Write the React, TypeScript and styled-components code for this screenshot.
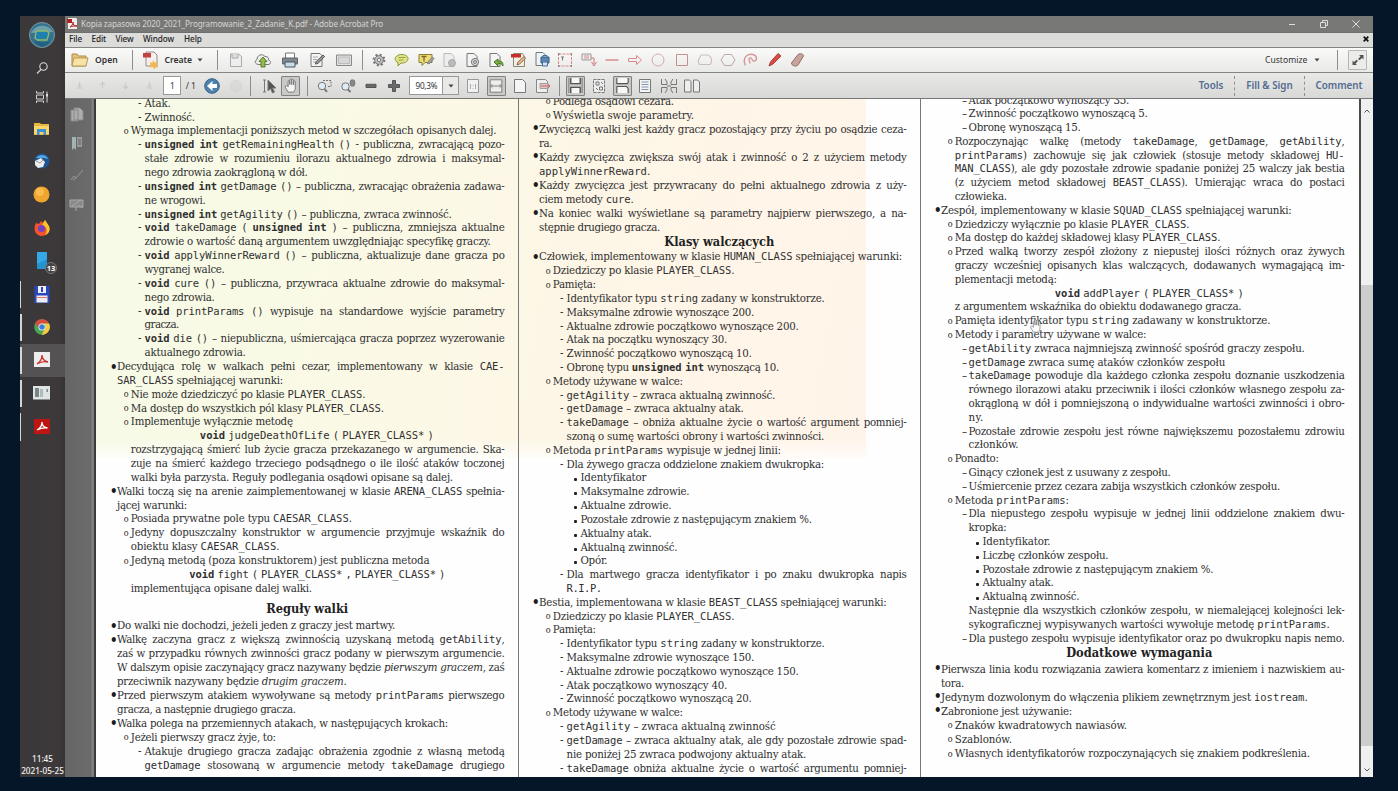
import React from 'react';
import styled, { createGlobalStyle, css } from 'styled-components';

const GlobalStyle = createGlobalStyle`
  * { box-sizing: border-box; }
  html, body { margin: 0; padding: 0; background: #041628; overflow: hidden; }
`;

const ui = `'Noto Sans', 'Open Sans', sans-serif`;
const serif = `'DejaVu Serif Condensed', 'DejaVu Serif', serif`;
const mono = `'DejaVu Sans Mono', 'Liberation Mono', monospace`;
const tracking = -0.27;

const Desktop = styled.div`
  width: 1398px; height: 791px; padding: 16px 25px 14px 20px;
  background: #041628; display: flex; font-family: ${ui};
`;
const Taskbar = styled.nav`
  width: 45px; flex: none; background: linear-gradient(90deg, #3b3839, #3d393a 85%, #363334);
  display: flex; flex-direction: column; align-items: stretch;
`;
const TaskSlot = styled.div<{ $h: number; $open?: number; $active?: boolean }>`
  height: ${p => p.$h}px; flex: none; display: flex; align-items: center; justify-content: center;
  position: relative; background: ${p => (p.$active ? '#555253' : 'transparent')}; padding-right: 2px;
  ${p => p.$open && css`&::before { content: ''; position: absolute; left: 0; top: 3px; bottom: 3px; width: ${p.$open}px; background: #d5d5d5; }`}
`;
const Badge = styled.span`
  position: absolute; left: 25px; top: 17px; width: 12px; height: 12px; border-radius: 6px;
  background: #444; border: 1px solid #777; color: #fff; font: 700 7.5px/10px ${ui}; text-align: center;
`;
const Clock = styled.div`
  margin-top: auto; padding-bottom: 0; height: 24.5px; color: #f1f1f1; text-align: center;
  font: 500 8.2px/12px ${ui}; white-space: nowrap;
`;
const Win = styled.div`flex: 1; min-width: 0; display: flex; flex-direction: column;`;
const TitleBar = styled.header`
  height: 15.5px; background: #787977; display: flex; align-items: center; padding: 0 1.5px 0 2px; color: #d4d4d2;
  font: 400 8.1px/16px ${ui}; flex: none;
`;
const TitleText = styled.span`margin-left: 3px; flex: 1; white-space: nowrap; letter-spacing: -0.13px;`;
const WinButton = styled.span`width: 32px; display: flex; justify-content: center;`;
const MenuBar = styled.div`
  height: 16px; flex: none; background: #dcdcda; border-top: 1px solid #6f6f6f; border-bottom: 1px solid #858583;
  display: flex; align-items: center; font: 500 8.2px/13px ${ui}; color: #222; padding: 0 0 1.5px 4px;
`;
const MenuItem = styled.span<{ $w: number }>`width: ${p => p.$w}px; letter-spacing: -0.08px;`;
const MenuClose = styled.span`margin-left: auto; width: 14px; display: flex; justify-content: center;`;
const Toolbar = styled.div<{ $second?: boolean }>`
  height: ${p => (p.$second ? 26 : 25.5)}px; flex: none; display: flex; align-items: center; color: #333;
  background: ${p => (p.$second ? 'linear-gradient(#e9e9e8, #d8d8d6)' : 'linear-gradient(#fafaf9, #e9e9e8)')};
  border-bottom: ${p => (p.$second ? '1px solid #777' : '1px solid #858583')};
  font: 600 8.6px/20px ${ui};
`;
const Slot = styled.span<{ $w: number; $faded?: boolean }>`
  width: ${p => p.$w}px; flex: none; height: 22px; display: flex; align-items: center; justify-content: center;
  opacity: ${p => (p.$faded ? 0.3 : 1)};
`;
const Pressed = styled.span`
  width: 19px; height: 20px; flex: none; display: flex; align-items: center; justify-content: center;
  background: #c9c9c7; border: 1px solid #828280; border-radius: 1px;
`;
const FullView = styled(Pressed)`background: #ececea; border-color: #b5b5b3; margin-right: 6px;`;
const Label = styled.span<{ $w: number; $light?: boolean }>`
  width: ${p => p.$w}px; flex: none; white-space: nowrap; font-weight: ${p => (p.$light ? 400 : 600)};
`;
const Sep = styled.i<{ $before?: number; $after?: number; $dotted?: boolean }>`
  width: 0; height: 20px; flex: none; border-left: 1px ${p => (p.$dotted ? 'dashed' : 'solid')} #8d8d8b;
  margin: 0 ${p => p.$after || 0}px 0 ${p => p.$before || 0}px;
`;
const Field = styled.span<{ $w: number; $ml?: number }>`
  width: ${p => p.$w}px; height: 19px; margin-left: ${p => p.$ml || 0}px; flex: none; background: #fff; border: 1px solid #999;
  font: 400 8.2px/17px ${ui}; text-align: center; color: #333; letter-spacing: -0.3px;
`;
const DropButton = styled.span`
  width: 16px; height: 19px; flex: none; border: 1px solid #999; border-left: 0; background: #e9e9e8;
  display: flex; align-items: center; justify-content: center; margin-right: 1.5px;
`;
const Grow = styled.span`flex: 1;`;
const PanelLink = styled.span<{ $w: number }>`
  width: ${p => p.$w}px; text-align: center; color: #526c90; font: 600 9.8px/20px ${ui}; white-space: nowrap;
`;
const Body = styled.div`flex: 1; min-height: 0; display: flex;`;
const SidePanel = styled.aside`
  width: 29px; flex: none; background: linear-gradient(90deg, #666 0, #6b6b6b 90%, #858585 94%, #777 100%);
  display: flex; flex-direction: column; align-items: center; padding: 0 5px 0 0;
`;
const SideSlot = styled.div`height: 30.3px; display: flex; align-items: center; justify-content: center;`;
const Page = styled.main`
  flex: 1; min-width: 0; display: flex; overflow: hidden; position: relative;
  border-left: 2px solid #3c3c3c; border-right: 2px solid #4b4b4b;
  background:
    linear-gradient(rgba(255,255,255,0) 340px, rgba(255,255,255,.85) 362px) 0 0 / 770px 362px no-repeat,
    linear-gradient(100deg, #f6fae6 0%, #f9fae6 27%, #fcf8e6 45%, #fdf6e6 62%, #fff5e9 85%, #fff4e9 100%) 0 0 / 770px 360px no-repeat,
    #fefefe;
`;
const Column = styled.section<{ $w: number; $pl: number; $body: number; $top: number; $border?: boolean }>`
  width: ${p => p.$w}px; flex: none; padding-left: ${p => p.$pl}px; overflow: hidden;
  border-right: ${p => (p.$border ? '1px solid #777' : '0')};
  > * { width: ${p => p.$body}px; }
  > :first-child { margin-top: ${p => p.$top}px; }
`;
const Block = styled.div<{ $lh: number }>`
  font: 400 11.4px/${p => p.$lh}px ${serif}; color: #303030; letter-spacing: ${tracking}px;
`;
const Heading = styled.h2<{ $h: number; $drop?: number }>`
  margin: 0 0 0 -3.500px; padding: ${p => p.$drop || 0}px 0 0; height: ${p => p.$h}px; display: flex; align-items: center; justify-content: center;
  font: 700 12.7px/14px ${serif}; color: #222; letter-spacing: 0;
`;
const Row = styled.div<{ $pl: number }>`
  padding-left: ${p => p.$pl}px; position: relative; height: 1lh; white-space: nowrap;
`;
const Marker = styled.span<{ $kind: string; $pl: number }>`
  position: absolute; top: 0; left: ${p => p.$pl - 6.5}px; color: #1c1c1c; letter-spacing: 0;
  ${p => p.$kind === 'o' && css`font-size: 9px; left: ${p.$pl - 7}px; top: .5px;`}
  ${p => p.$kind === '•' && css`font-size: 16px; left: ${p.$pl - 7.5}px; top: .5px;`}
  ${p => p.$kind === '·' && css`&::before { content: ''; display: block; width: 3px; height: 3px; border-radius: 1px; background: #222; margin-top: 7px; }`}
`;
const Line = styled.span<{ $w: number }>`
  display: block; width: ${p => (p.$w ? `${p.$w}px` : '100%')}; text-align-last: justify; white-space: nowrap;
`;
const Code = styled.code<{ $bold?: boolean }>`
  font-family: ${mono}; font-size: 10.5px; font-weight: ${p => (p.$bold ? 700 : 400)}; letter-spacing: -0.12px; line-height: 1px;
  word-spacing: ${p => (p.$bold ? -2.5 : 0)}px;
`;
const Scroll = styled.div`
  width: 12px; flex: none; background: #f0f0f0; display: flex; flex-direction: column; align-items: center;
`;
const ScrollCap = styled.div<{ $h: number }>`height: ${p => p.$h}px; display: flex; align-items: center;`;
const ScrollEnd = styled(ScrollCap)`align-items: flex-end; padding-bottom: 5px;`;
const Thumb = styled.div`width: 12px; height: 461px; background: #cdcdcd;`;
const HandPointer = styled.span`position: absolute; left: 933px; top: 218px; line-height: 0;`;

type RowData = [marker: string, level: number, width: number, text: string, shift?: number];

const col1a: RowData[] = [
  ['-', 2, 26, 'Atak.'],
  ['-', 2, 50, 'Zwinność.'],
  ['o', 1, 365.5, 'Wymaga implementacji poniższych metod w szczegółach opisanych dalej.'],
  ['-', 2, 0, '~unsigned int~ `getRemainingHealth` `()` - publiczna, zwracającą pozo-'],
  ['', 2, 0, 'stałe zdrowie w rozumieniu ilorazu aktualnego zdrowia i maksymal-'],
  ['', 2, 163, 'nego zdrowia zaokrągloną w dół.'],
  ['-', 2, 0, '~unsigned int~ `getDamage` `()` – publiczna, zwracając obrażenia zadawa-'],
  ['', 2, 61, 'ne wrogowi.'],
  ['-', 2, 307, '~unsigned int~ `getAgility` `()` – publiczna, zwraca zwinność.'],
  ['-', 2, 0, '~void~ `takeDamage` `(` ~unsigned int~ `)` – publiczna, zmniejsza aktualne'],
  ['', 2, 346, 'zdrowie o wartość daną argumentem uwzględniając specyfikę graczy.'],
  ['-', 2, 0, '~void~ `applyWinnerReward` `()` – publiczna, aktualizuje dane gracza po'],
  ['', 2, 80, 'wygranej walce.'],
  ['-', 2, 0, '~void~ `cure` `()` – publiczna, przywraca aktualne zdrowie do maksymal-'],
  ['', 2, 70, 'nego zdrowia.'],
  ['-', 2, 0, '~void~ `printParams` `()` wypisuje na standardowe wyjście parametry'],
  ['', 2, 34, 'gracza.'],
  ['-', 2, 0, '~void~ `die` `()` – niepubliczna, uśmiercająca gracza poprzez wyzerowanie'],
  ['', 2, 101, 'aktualnego zdrowia.'],
  ['•', 0, 0, 'Decydująca rolę w walkach pełni cezar, implementowany w klasie `CAE-`'],
  ['', 0, 166, '`SAR_CLASS` spełniającej warunki:'],
  ['o', 1, 234.5, 'Nie może dziedziczyć po klasie `PLAYER_CLASS`.'],
  ['o', 1, 253, 'Ma dostęp do wszystkich pól klasy `PLAYER_CLASS`.'],
  ['o', 1, 162, 'Implementuje wyłącznie metodę'],
  ['', 1, 234, '~void~ `judgeDeathOfLife` `(` `PLAYER_CLASS*` `)`', 69],
  ['', 1, 0, 'rozstrzygającą śmierć lub życie gracza przekazanego w argumencie. Ska-'],
  ['', 1, 0, 'zuje na śmierć każdego trzeciego podsądnego o ile ilość ataków toczonej'],
  ['', 1, 322, 'walki była parzysta. Reguły podlegania osądowi opisane są dalej.'],
  ['•', 0, 0, 'Walki toczą się na arenie zaimplementowanej w klasie `ARENA_CLASS` spełnia-'],
  ['', 0, 70, 'jącej warunki:'],
  ['o', 1, 221, 'Posiada prywatne pole typu `CAESAR_CLASS`.'],
  ['o', 1, 0, 'Jedyny dopuszczalny konstruktor w argumencie przyjmuje wskaźnik do'],
  ['', 1, 148.5, 'obiektu klasy `CAESAR_CLASS`.'],
  ['o', 1, 298.5, 'Jedyną metodą (poza konstruktorem) jest publiczna metoda'],
  ['', 1, 256, '~void~ `fight` `(` `PLAYER_CLASS*` `,` `PLAYER_CLASS*` `)`', 58.5],
  ['', 1, 181, 'implementująca opisane dalej walki.'],
];
const col1b: RowData[] = [
  ['•', 0, 278, 'Do walki nie dochodzi, jeżeli jeden z graczy jest martwy.'],
  ['•', 0, 0, 'Walkę zaczyna gracz z większą zwinnością uzyskaną metodą `getAbility`,'],
  ['', 0, 0, 'zaś w przypadku równych zwinności gracz podany w pierwszym argumencie.'],
  ['', 0, 0, 'W dalszym opisie zaczynający gracz nazywany będzie ^pierwszym graczem^, zaś'],
  ['', 0, 229.5, 'przeciwnik nazywany będzie ^drugim graczem^.'],
  ['•', 0, 0, 'Przed pierwszym atakiem wywoływane są metody `printParams` pierwszego'],
  ['', 0, 178.5, 'gracza, a następnie drugiego gracza.'],
  ['•', 0, 331, 'Walka polega na przemiennych atakach, w następujących krokach:'],
  ['o', 1, 145, 'Jeżeli pierwszy gracz żyje, to:'],
  ['-', 2, 0, 'Atakuje drugiego gracza zadając obrażenia zgodnie z własną metodą'],
  ['', 2, 0, '`getDamage` stosowaną w argumencie metody `takeDamage` drugiego'],
];
const col2a: RowData[] = [
  ['o', 1, 121, 'Podlega osądowi cezara.'],
  ['o', 1, 141, 'Wyświetla swoje parametry.'],
  ['•', 0, 0, 'Zwycięzcą walki jest każdy gracz pozostający przy życiu po osądzie ceza-'],
  ['', 0, 13, 'ra.'],
  ['•', 0, 0, 'Każdy zwycięzca zwiększa swój atak i zwinność o 2 z użyciem metody'],
  ['', 0, 111, '`applyWinnerReward`.'],
  ['•', 0, 0, 'Każdy zwycięzca jest przywracany do pełni aktualnego zdrowia z uży-'],
  ['', 0, 94.5, 'ciem metody `cure`.'],
  ['•', 0, 0, 'Na koniec walki wyświetlane są parametry najpierw pierwszego, a na-'],
  ['', 0, 121, 'stępnie drugiego gracza.'],
];
const col2b: RowData[] = [
  ['•', 0, 363, 'Człowiek, implementowany w klasie `HUMAN_CLASS` spełniającej warunki:'],
  ['o', 1, 181.5, 'Dziedziczy po klasie `PLAYER_CLASS`.'],
  ['o', 1, 43, 'Pamięta:'],
  ['-', 2, 258, 'Identyfikator typu `string` zadany w konstruktorze.'],
  ['-', 2, 187.5, 'Maksymalne zdrowie wynoszące 200.'],
  ['-', 2, 232, 'Aktualne zdrowie początkowo wynoszące 200.'],
  ['-', 2, 160.5, 'Atak na początku wynoszący 30.'],
  ['-', 2, 185, 'Zwinność początkowo wynoszącą 10.'],
  ['-', 2, 212.5, 'Obronę typu ~unsigned int~ wynoszącą 10.'],
  ['o', 1, 130, 'Metody używane w walce:'],
  ['-', 2, 208.5, '`getAgility` – zwraca aktualną zwinność.'],
  ['-', 2, 177, '`getDamage` – zwraca aktualny atak.'],
  ['-', 2, 0, '`takeDamage` – obniża aktualne życie o wartość argument pomniej-'],
  ['', 2, 257.5, 'szoną o sumę wartości obrony i wartości zwinności.'],
  ['o', 1, 228, 'Metoda `printParams` wypisuje w jednej linii:'],
  ['-', 2, 257.5, 'Dla żywego gracza oddzielone znakiem dwukropka:'],
  ['·', 3, 66, 'Identyfikator'],
  ['·', 3, 109, 'Maksymalne zdrowie.'],
  ['·', 3, 91, 'Aktualne zdrowie.'],
  ['·', 3, 231.5, 'Pozostałe zdrowie z następującym znakiem %.'],
  ['·', 3, 71, 'Aktualny atak.'],
  ['·', 3, 97, 'Aktualną zwinność.'],
  ['·', 3, 27, 'Opór.'],
  ['-', 2, 0, 'Dla martwego gracza identyfikator i po znaku dwukropka napis'],
  ['', 2, 35, '`R.I.P.`'],
  ['•', 0, 347.5, 'Bestia, implementowana w klasie `BEAST_CLASS` spełniającej warunki:'],
  ['o', 1, 181.5, 'Dziedziczy po klasie `PLAYER_CLASS`.'],
  ['o', 1, 43, 'Pamięta:'],
  ['-', 2, 258, 'Identyfikator typu `string` zadany w konstruktorze.'],
  ['-', 2, 187.5, 'Maksymalne zdrowie wynoszące 150.'],
  ['-', 2, 232, 'Aktualne zdrowie początkowo wynoszące 150.'],
  ['-', 2, 160.5, 'Atak początkowo wynoszący 40.'],
  ['-', 2, 185, 'Zwinność początkowo wynoszącą 20.'],
  ['o', 1, 130, 'Metody używane w walce:'],
  ['-', 2, 209, '`getAgility` – zwraca aktualną zwinność'],
  ['-', 2, 0, '`getDamage` – zwraca aktualny atak, ale gdy pozostałe zdrowie spad-'],
  ['', 2, 239.5, 'nie poniżej 25 zwraca podwojony aktualny atak.'],
  ['-', 2, 0, '`takeDamage` obniża aktualne życie o wartość argumentu pomniej-'],
];
const col3a: RowData[] = [
  ['–', 2, 160.5, 'Atak początkowo wynoszący 35.'],
  ['–', 2, 179, 'Zwinność początkowo wynoszącą 5.'],
  ['–', 2, 112, 'Obronę wynoszącą 15.'],
  ['o', 1, 0, 'Rozpoczynając walkę (metody `takeDamage`, `getDamage`, `getAbility`,'],
  ['', 1, 0, '`printParams`) zachowuje się jak człowiek (stosuje metody składowej `HU-`'],
  ['', 1, 0, '`MAN_CLASS`), ale gdy pozostałe zdrowie spadanie poniżej 25 walczy jak bestia'],
  ['', 1, 0, '(z użyciem metod składowej `BEAST_CLASS`). Umierając wraca do postaci'],
  ['', 1, 52, 'człowieka.'],
  ['•', 0, 350.5, 'Zespół, implementowany w klasie `SQUAD_CLASS` spełniającej warunki:'],
  ['o', 1, 234.5, 'Dziedziczy wyłącznie po klasie `PLAYER_CLASS`.'],
  ['o', 1, 265.5, 'Ma dostęp do każdej składowej klasy `PLAYER_CLASS`.'],
  ['o', 1, 0, 'Przed walką tworzy zespół złożony z niepustej ilości różnych oraz żywych'],
  ['', 1, 0, 'graczy wcześniej opisanych klas walczących, dodawanych wymagającą im-'],
  ['', 1, 102, 'plementacji metodą:'],
  ['', 1, 189, '~void~ `addPlayer` `(` `PLAYER_CLASS*` `)`', 100],
  ['', 1, 286.5, 'z argumentem wskaźnika do obiektu dodawanego gracza.'],
  ['o', 1, 315.5, 'Pamięta identyfikator typu `string` zadawany w konstruktorze.'],
  ['o', 1, 191.5, 'Metody i parametry używane w walce:'],
  ['–', 2, 336, '`getAbility` zwraca najmniejszą zwinność spośród graczy zespołu.'],
  ['–', 2, 256.5, '`getDamage` zwraca sumę ataków członków zespołu'],
  ['–', 2, 0, '`takeDamage` powoduje dla każdego członka zespołu doznanie uszkodzenia'],
  ['', 2, 0, 'równego ilorazowi ataku przeciwnik i ilości członków własnego zespołu za-'],
  ['', 2, 0, 'okrągloną w dół i pomniejszoną o indywidualne wartości zwinności i obro-'],
  ['', 2, 15, 'ny.'],
  ['–', 2, 0, 'Pozostałe zdrowie zespołu jest równe największemu pozostałemu zdrowiu'],
  ['', 2, 50, 'członków.'],
  ['o', 1, 44, 'Ponadto:'],
  ['–', 2, 202, 'Ginący członek jest z usuwany z zespołu.'],
  ['–', 2, 311.5, 'Uśmiercenie przez cezara zabija wszystkich członków zespołu.'],
  ['o', 1, 114, 'Metoda `printParams`:'],
  ['–', 2, 0, 'Dla niepustego zespołu wypisuje w jednej linii oddzielone znakiem dwu-'],
  ['', 2, 38, 'kropka:'],
  ['·', 3, 68, 'Identyfikator.'],
  ['·', 3, 126, 'Liczbę członków zespołu.'],
  ['·', 3, 231, 'Pozostałe zdrowie z następującym znakiem %.'],
  ['·', 3, 71, 'Aktualny atak.'],
  ['·', 3, 97, 'Aktualną zwinność.'],
  ['', 2, 0, 'Następnie dla wszystkich członków zespołu, w niemalejącej kolejności lek-'],
  ['', 2, 361, 'sykograficznej wypisywanych wartości wywołuje metodę `printParams`.'],
  ['–', 2, 0, 'Dla pustego zespołu wypisuje identyfikator oraz po dwukropku napis nemo.'],
];
const col3b: RowData[] = [
  ['•', 0, 0, 'Pierwsza linia kodu rozwiązania zawiera komentarz z imieniem i nazwiskiem au-'],
  ['', 0, 23, 'tora.'],
  ['•', 0, 366.5, 'Jedynym dozwolonym do włączenia plikiem zewnętrznym jest `iostream`.'],
  ['•', 0, 131, 'Zabronione jest używanie:'],
  ['o', 1, 172, 'Znaków kwadratowych nawiasów.'],
  ['o', 1, 57, 'Szablonów.'],
  ['o', 1, 355, 'Własnych identyfikatorów rozpoczynających się znakiem podkreślenia.'],
];

const inline = (text: string) =>
  text.split(/(`[^`]+`|~[^~]+~|\^[^^]+\^)/).filter(Boolean).map((part, i) => {
    const inner = part.slice(1, -1);
    if (part[0] === '`') return <Code key={i}>{inner}</Code>;
    if (part[0] === '~') return <Code key={i} $bold>{inner}</Code>;
    if (part[0] === '^') return <em key={i}>{inner}</em>;
    return part;
  });

const FittedLine = ({ width, text }: { width: number; text: string }) => {
  const ref = React.useRef<HTMLSpanElement>(null);
  React.useLayoutEffect(() => {
    const el = ref.current;
    if (!el) return;
    const target = el.getBoundingClientRect().width;
    const range = document.createRange();
    range.selectNodeContents(el);
    el.style.textAlignLast = 'left';
    const natural = range.getBoundingClientRect().width;
    const count = (el.textContent || '').length;
    if (width || natural > target) {
      const delta = (target - natural) / count;
      el.style.letterSpacing = `${tracking + delta}px`;
      el.querySelectorAll('code').forEach(c => { c.style.letterSpacing = `${-0.12 + delta}px`; });
    }
    el.style.textAlignLast = '';
  }, [width, text]);
  return <Line ref={ref} $w={width}>{inline(text)}</Line>;
};

const Text = ({ rows, lh }: { rows: RowData[]; lh: number }) => (
  <Block $lh={lh}>
    {rows.map(([marker, level, width, text, shift = 0], i) => (
      <Row key={i} $pl={level * 13.8 + shift}>
        {marker && <Marker $kind={marker} $pl={level * 13.8}>{marker === '·' ? '' : marker}</Marker>}
        <FittedLine width={width} text={text} />
      </Row>
    ))}
  </Block>
);

const Svg = ({ s = 18, children }: { s?: number; children: React.ReactNode }) => (
  <svg width={s} height={s} viewBox="0 0 18 18" fill="none" stroke="#777" strokeWidth="1" strokeLinejoin="round">{children}</svg>
);
const Caret = () => <svg width="6" height="4" viewBox="0 0 6 4"><path d="M.5.5h5L3 3.4z" fill="#444" /></svg>;
const sheet = 'M4 2.5h7l3 3v10H4z';
const pinkLine = '#d98b8b';

const fileIcons = [
  <Svg><path d="M3.500 3h8l3 2.500v10h-11z" fill="#eee" stroke="#aaa" /><path d="M5 3v4h6V3" fill="#ddd" stroke="#aaa" /></Svg>,
  <Svg><path d="M5 13.500C1 13.500 0 10 3 8.500 3 4 8 2 11 5.500c3-.5 4 2 3.500 3.500 3 1 2.500 4.500-.5 4.500z" fill="#eee" stroke="#777" /><path d="M9 6l4 4.500h-2V16H7v-5.500H5z" fill="#93bb52" stroke="#587c2c" /></Svg>,
  <Svg><path d="M4.500 7V2h9v5" fill="#fff" /><path d="M1.500 7h15v6h-15z" fill="#7f878d" stroke="#60676d" /><path d="M4 11h10v5H4z" fill="#c8dcea" stroke="#4f565c" /></Svg>,
  <Svg><path d="M3 2.500h9l2 2v11H3z" fill="#f4f4f4" /><path d="M5 6h5M5 8.500h4M5 11h3" stroke="#aaa" /><path d="M7.500 13l.7-2.500L15 4l1.500 1.500-6.500 7z" fill="#999" stroke="#555" /></Svg>,
  <Svg><path d="M1.500 4h15v10.500h-15z" fill="#e2e2e2" stroke="#888" /><path d="M3.500 6h11v6.500h-11z" fill="#d8d8d8" stroke="#bbb" /></Svg>,
];
const commentIcons = [
  <Svg><circle cx="9" cy="9" r="5.300" stroke="#777" strokeDasharray="2 2.160" strokeWidth="2.200" /><circle cx="9" cy="9" r="4.300" fill="#c4c4c4" stroke="#777" /><circle cx="9" cy="9" r="1.800" fill="#eee" /></Svg>,
  <Svg><path d="M9 3.500c8 0 8 8.500 0 8.500H8l-3 3v-3.500C.5 10 1 3.500 9 3.500z" fill="#dfe488" stroke="#8f943c" /><path d="M5.500 6.500h7M5.500 9h5" stroke="#9da046" /></Svg>,
  <Svg><path d="M2 3.500h13v8H8l-3 3v-3H2z" fill="#efdc74" stroke="#8b7c35" /><path d="M4.500 5.500h5M7 5.500v5" stroke="#76682a" strokeWidth="1.300" /><path d="M10 12l5.500-6 1.500 1.500-5 5.500z" fill="#aaa" /></Svg>,
  <Svg><path d={sheet} fill="#eee" stroke="#bbb" /><circle cx="12" cy="12" r="3.500" fill="#bbb" stroke="#aaa" /></Svg>,
  <Svg><path d={sheet} fill="#f4f4f4" /><circle cx="12" cy="11" r="3.600" fill="#ddd" /><circle cx="12" cy="11" r="1.500" /></Svg>,
  <Svg><path d={sheet} fill="#f4f4f4" /><path d="M7 9l4-3v2c4 0 5 1 5 5-1-2-2-2.500-5-2.500V13z" fill="#79ac43" stroke="#4c7526" transform="translate(1 2)" /></Svg>,
  <Svg><path d="M3.500 2.500h9l2 3v10h-11z" fill="#f4efe3" stroke="#887" /><path d="M1 3h10v3.500H1z" fill="#c7302b" stroke="none" /><path d="M7 14l1-3 6-5.500 1.700 1.500-6 6z" fill="#eac27c" stroke="#866" /></Svg>,
  <Svg><path d={sheet} fill="#eef2f6" transform="translate(-1 -1)" /><path d="M8 6h8v6H8z" fill="#5f86ae" stroke="#345b86" /><path d="M10 4.500h4V6h-4zM9.500 11h5v4h-5z" fill="#d5e1ec" stroke="#44719f" /></Svg>,
  <Svg><path d="M2.500 3h13v12h-13z" stroke={pinkLine} strokeDasharray="3 1" /><path d="M2 3h1.500M14.500 3H16M2 15h1.500M14.500 15H16" stroke="#777" strokeWidth="1.500" /><path d="M5 6h3M6.500 6v3.500" stroke="#777" /></Svg>,
  <Svg><path d="M2 3h9v6H2z" fill="#eee" stroke="#999" /><path d="M4 5h5M4 7h5" stroke={pinkLine} /><path d="M11 7h3v6M11.500 11l2.500 4 2.500-4" stroke="#d07777" /></Svg>,
  <Svg><path d="M2.500 9h13" stroke={pinkLine} strokeWidth="1.500" /></Svg>,
  <Svg><path d="M2.500 7.500h8v-3L15.500 9l-5 4.500v-3h-8z" stroke={pinkLine} /></Svg>,
  <Svg><circle cx="9" cy="9" r="6" stroke="#dba8a8" /></Svg>,
  <Svg><path d="M3.500 3.500h11v11h-11z" stroke="#c79090" /></Svg>,
  <Svg><path d="M5 4h7c1 0 3.500 2.500 3.500 5s-1 4.500-2 4.500H4c-1 0-2-2.500-1.500-4.500z" stroke="#cbb" strokeWidth="1.100" /></Svg>,
  <Svg><path d="M5.500 3.500h7L16 9l-3.500 5.500h-7L2 9z" stroke="#baa8a8" /></Svg>,
  <Svg><path d="M3.500 14.500C0 7 5 2 11 3.500c5 1.500 4 6 1 6.500s-1-4-4-3 1.500 4-.5 5.500" stroke="#d49a9a" strokeWidth="1.400" /></Svg>,
  <Svg><path d="M3 15l1.500-4L12 2.500 15 5l-8 8z" fill="#dd4a3f" stroke="#a64040" /></Svg>,
  <Svg><path d="M2.500 12L9 3.500c1.500-1.500 6-.5 5.500 1.500L9 14c-1.500 2-6.500 1-6.500-2z" fill="#c9a49d" stroke="#8e6f6a" /></Svg>,
];
const zoomIcons = [
  <Svg><path d="M8 3.500h8v6h-4" strokeDasharray="2 1" /><circle cx="7" cy="9" r="3.700" fill="#dcebf5" /><path d="M9.500 12l2.500 2.800" strokeWidth="2" /></Svg>,
  <Svg><circle cx="6.500" cy="9.500" r="3.700" fill="#dcebf5" /><path d="M9 12.500l2.500 2.500" strokeWidth="2" /><path d="M12 3h3l1 3-1 3h-3l-1-3z" fill="#888" /></Svg>,
  <Svg><path d="M4 7.300h10v3.200H4z" fill="#6a6a6a" stroke="#555" /></Svg>,
  <Svg><path d="M7.500 3.500h3v4h4v3h-4v4h-3v-4h-4v-3h4z" fill="#6a6a6a" stroke="#555" /></Svg>,
];
const fitIcons = [
  <Svg><path d="M3.500 2.500h11v13h-11z" fill="#f1f1f1" stroke="#999" /><path d="M6.500 7v5M11.500 7v5M9 8v.8M9 11v.8" stroke="#aaa" /></Svg>,
  <Pressed><Svg s={16}><path d="M2.500 2v14h13V2z" fill="#eee" /><path d="M2.500 9h13M5 7L3 9l2 2M13 7l2 2-2 2" /></Svg></Pressed>,
  <Svg><path d="M3.500 2.500h8l3 3v10h-11z" fill="#f5f5f5" /></Svg>,
  <Svg><path d="M2.500 2.500h9l2 2v11h-11z" fill="#eee" stroke="#888" /><path d="M6 6.500h8v5H6z" fill="#ddc6c3" stroke="#a99" /><path d="M7 9h9M14 7l2 2-2 2" stroke="#c66" /></Svg>,
];
const viewIcons = [
  <Pressed><Svg s={17}><path d="M4 1v6h10V1M4 17v-6h10v6" fill="#f7f7f7" stroke="#555" strokeWidth="1.500" /><path d="M2 1v16M16 1v16" /></Svg></Pressed>,
  <Svg><path d="M3.500 2.500h11v13h-11z" fill="#eee" strokeDasharray="3 1" /><path d="M6 5h3v3H6zM9.500 10h3v3h-3zM11 5l2 2M6 11l2 2" /></Svg>,
  <Pressed><Svg s={17}><path d="M3 1v6h11l1-1V1M3 17v-7h10l2 2v5" fill="#f7f7f7" stroke="#555" strokeWidth="1.200" /></Svg></Pressed>,
  <Svg><path d="M3.500 2.500h11v13h-11z" fill="#f5f5f5" /><path d="M5.500 5h7M5.500 7.500h7M5.500 10h7M5.500 12.500h7" stroke="#8297b3" /></Svg>,
  <Svg><path d="M1.500 2v5.500H7V5L5 2M16.500 2v5.500H11V5l2-3M1.500 16v-5.500H7V13l-2 3M16.500 16v-5.500H11V13l2 3M7 9h4" stroke="#777" /></Svg>,
  <Svg><path d="M1.500 3h5l1.500 1.500V15H1.500zM10.500 3h4L16.500 5v10h-6z" fill="#eee" stroke="#777" /></Svg>,
];
const hand = 'M5 16C3 12 1 10.500 2 9.500s2 0 3 1V4.500c0-1.300 1.800-1.300 1.800 0V8 3c0-1.300 2-1.300 2 0v5-4.500c0-1.300 2-1.300 2 0V8.500 5c0-1.200 1.800-1.200 1.800 0v6.500c0 2-1 3-1.600 4.500z';

const TaskIcons = {
  orb: (
    <svg width="28" height="28" viewBox="0 0 28 28"><circle cx="14" cy="14" r="12.500" fill="#34738f" stroke="#7d979d" /><path d="M3 12C7 3 20 2 25 11" fill="#6fa0a9" /><path d="M8 11l2-1h9l2 2-2 7H9l-2-2z" fill="#1e80ae" stroke="#8fb86c" strokeWidth="1.300" /><path d="M6 18c4 4 11 5 16 1l-2 4-6 3-6-3z" fill="#235f83" /></svg>
  ),
  search: <svg width="14" height="14" viewBox="0 0 14 14" fill="none" stroke="#ddd" strokeWidth="1.100"><circle cx="8.500" cy="5.500" r="3.700" /><path d="M6 8.500L2 12.500" /></svg>,
  view: <svg width="14" height="14" viewBox="0 0 14 14" fill="none" stroke="#d5d5d5"><path d="M1.500 1v2h7V1M1.500 5h7v4h-7zM1.500 13v-2h7v2M12 1.500v11" /><path d="M11 4h2v2.500h-2z" fill="#ddd" stroke="none" /></svg>,
  explorer: <svg width="17" height="16" viewBox="0 0 17 16"><path d="M1 2h6l1 1h8v11H1z" fill="#e8b541" /><path d="M1 5h15v8H1z" fill="#f7d66c" /><path d="M4 14V8h9v6h-2.500v-3h-4v3z" fill="#3b8fd2" /></svg>,
  mail: <svg width="17" height="17" viewBox="0 0 17 17"><circle cx="9" cy="8" r="7.500" fill="#1d5594" /><path d="M3 5c4-5 11-3 12 1l-4-1z" fill="#57a3df" /><path d="M2 8l6-3 4 4-2 5-5 1-3-3z" fill="#eceeee" /><path d="M3 8l4 2 3-3" fill="none" stroke="#99a" /></svg>,
  ball: <svg width="17" height="17" viewBox="0 0 17 17"><circle cx="8.500" cy="8.500" r="8" fill="#f0a52f" /><circle cx="7" cy="6" r="4" fill="#f8bd4c" /></svg>,
  fox: <svg width="18" height="18" viewBox="0 0 18 18"><path d="M3 4l3 1 2-3 2 2 2-3 3 5c4 6-1 11-6 11S-1 12 3 4z" fill="#f5522e" /><path d="M10 4l2-3 4 6c2 5-1 8-4 9 3-4 2-9-3-9z" fill="#fbc62b" /><circle cx="8.500" cy="9.500" r="3.600" fill="#7544bd" /></svg>,
  phone: <svg width="12" height="18" viewBox="0 0 12 18"><path d="M1 0h10v17H1z" fill="#2493d1" /><path d="M1 0h10v7L1 12z" fill="#35a9e5" /></svg>,
  floppy: <svg width="16" height="17" viewBox="0 0 16 17"><path d="M.5 0h15v17H.5z" fill="#2947bf" /><path d="M4 0h8v7H4zM2.500 9.500h11v7h-11z" fill="#eee" /><path d="M7 1h2v5H7z" fill="#2947bf" /><path d="M3 11h10v1H3z" fill="#d77" /></svg>,
  chrome: <svg width="16" height="16" viewBox="0 0 16 16"><circle cx="8" cy="8" r="7.800" fill="#4aa653" /><path d="M1.200 4.200A7.800 7.800 0 0 1 15 4.500H8a3.500 3.500 0 0 0-3 5.300z" fill="#dd4b3e" /><path d="M15 4.500A7.800 7.800 0 0 1 7.500 15.800L11 10a3.500 3.500 0 0 0-3-5.500z" fill="#f7cb3d" /><circle cx="8" cy="8" r="3.600" fill="#fff" /><circle cx="8" cy="8" r="2.800" fill="#3f7fd8" /></svg>,
  acrobat: <svg width="16" height="16" viewBox="0 0 16 16"><path d="M0 0h16v15H0z" fill="#eee" /><path d="M3 12c3-2 5-5 5-9 0 4 2 6 6 7-4-1-8 0-11 2z" fill="none" stroke="#c92f2c" strokeWidth="1.300" /></svg>,
  app: <svg width="17" height="14" viewBox="0 0 17 14"><path d="M0 0h17v13.500H0z" fill="#dfe5e5" /><path d="M2 2h4v9H2z" fill="#788485" /><path d="M7 3h3v8H7z" fill="#aebbbb" /><path d="M13.500 3H15v3h-1.500z" fill="#788" /></svg>,
  reader: <svg width="16" height="15" viewBox="0 0 16 15"><path d="M0 0h16v15H0z" fill="#bd1612" /><path d="M3 11c3-1.500 5-4.500 5-8 0 3.500 2 5.500 5.500 6-4-.5-7.500.5-10.500 2z" fill="none" stroke="#fff" strokeWidth="1.300" /></svg>,
};

const navPaths = ['M9 3v8M6 8l3 3 3-3M4 13h10', 'M9 14V4M5 8l4-4 4 4', 'M9 4v10M5 10l4 4 4-4', 'M9 3v8M6 8l3 3 3-3M4 13h10'];

export default function App() {
  return (
    <>
      <GlobalStyle />
      <Desktop>
        <Taskbar>
          <TaskSlot $h={38}>{TaskIcons.orb}</TaskSlot>
          <TaskSlot $h={27}>{TaskIcons.search}</TaskSlot>
          <TaskSlot $h={31}>{TaskIcons.view}</TaskSlot>
          <TaskSlot $h={33}>{TaskIcons.explorer}</TaskSlot>
          <TaskSlot $h={33}>{TaskIcons.mail}</TaskSlot>
          <TaskSlot $h={33}>{TaskIcons.ball}</TaskSlot>
          <TaskSlot $h={33.500}>{TaskIcons.fox}</TaskSlot>
          <TaskSlot $h={33}>{TaskIcons.phone}<Badge>13</Badge></TaskSlot>
          <TaskSlot $h={33} $open={1}>{TaskIcons.floppy}</TaskSlot>
          <TaskSlot $h={33} $open={2}>{TaskIcons.chrome}</TaskSlot>
          <TaskSlot $h={33} $open={2} $active>{TaskIcons.acrobat}</TaskSlot>
          <TaskSlot $h={33} $open={2}>{TaskIcons.app}</TaskSlot>
          <TaskSlot $h={34} $open={1}>{TaskIcons.reader}</TaskSlot>
          <Clock>11:45<br />2021-05-25</Clock>
        </Taskbar>
        <Win>
          <TitleBar>
            <svg width="11" height="11" viewBox="0 0 11 11"><path d="M1 0h8l1 1v10H1z" fill="#eee" /><path d="M0 1h5v4H0z" fill="#b3201d" /><path d="M3 9c2-1 3-3 3-5 0 3 1 4 4 4-3 0-5 0-7 1z" fill="none" stroke="#b3201d" /></svg>
            <TitleText>Kopia zapasowa 2020_2021_Programowanie_2_Zadanie_K.pdf - Adobe Acrobat Pro</TitleText>
            <WinButton><svg width="8" height="8" viewBox="0 0 8 8"><path d="M1 4.500h6" stroke="#ddd" /></svg></WinButton>
            <WinButton><svg width="8" height="8" viewBox="0 0 8 8" fill="none" stroke="#ddd"><path d="M.5 2.500h5v5h-5zM2.500 2.500v-2h5v5h-2" /></svg></WinButton>
            <WinButton><svg width="8" height="8" viewBox="0 0 8 8" stroke="#ddd"><path d="M.5.5l7 7M7.500.5l-7 7" /></svg></WinButton>
          </TitleBar>
          <MenuBar>
            <MenuItem $w={22.500}>File</MenuItem><MenuItem $w={24}>Edit</MenuItem><MenuItem $w={27.500}>View</MenuItem>
            <MenuItem $w={41}>Window</MenuItem><MenuItem $w={30}>Help</MenuItem>
            <MenuClose><svg width="6" height="6" viewBox="0 0 6 6" stroke="#111" strokeWidth="1.700"><path d="M.7.7l4.600 4.600M5.300.7L.7 5.300" /></svg></MenuClose>
          </MenuBar>
          <Toolbar>
            <Slot $w={30}><svg width="18" height="16" viewBox="0 0 18 16"><path d="M1 14V2h5l1.500 2H15v10z" fill="#e6c278" stroke="#a98b4b" /><path d="M1 14L3 6h14l-2 8z" fill="#f8e2a5" stroke="#b99a57" /></svg></Slot>
            <Label $w={37}>Open</Label>
            <Sep $after={9} />
            <Slot $w={18}><svg width="16" height="18" viewBox="0 0 16 18"><path d="M3 1h8l3 3v11H3z" fill="#f5f0ee" stroke="#988" /><path d="M0 2h8v4.500H0z" fill="#c5433f" /><path d="M10 9l1.500 2.500 3-.5-1 3 2 2-3 .5-1 1.500-2-2-3 .5 1-3-1-2 3 .3z" fill="#efb750" /></svg></Slot>
            <Label $w={32}>&nbsp;&nbsp;Create</Label>
            <Slot $w={15}><Caret /></Slot>
            <Sep $before={10} $after={4.500} />
            {fileIcons.map((icon, i) => <Slot key={i} $w={27}>{icon}</Slot>)}
            <Sep $before={4} $after={5} />
            {commentIcons.map((icon, i) => <Slot key={i} $w={23.280}>{icon}</Slot>)}
            <Grow />
            <Label $w={45} $light>Customize</Label>
            <Slot $w={14}><Caret /></Slot>
            <Sep $before={13} $after={10} />
            <FullView><svg width="14" height="14" viewBox="0 0 14 14" fill="#555"><path d="M8 2h4.500v4.500L11 5 8.500 7.300 7 6l2.500-2.500zM6 12H1.500V7.500L3 9l2.500-2.300L7 8l-2.500 2.500z" /></svg></FullView>
          </Toolbar>
          <Toolbar $second>
            <Slot $w={2.500} />
            {navPaths.map((d, i) => (
              <Slot key={i} $w={23.300} $faded><Svg s={11}><path d={d} strokeWidth="1.800" stroke="#999" /></Svg></Slot>
            ))}
            <Field $w={18} $ml={2.500}>1</Field>
            <Label $w={18} $light>&nbsp;&nbsp;/ 1</Label>
            <Slot $w={25}><Svg><circle cx="9" cy="9" r="7.300" fill="#4d82b0" stroke="#34607f" /><path d="M14 7v4H9.500v3L4 9l5.500-5v3z" fill="#fff" stroke="none" /></Svg></Slot>
            <Slot $w={24} $faded><Svg s={16}><circle cx="9" cy="9" r="6.500" fill="#ccc" stroke="#bbb" /></Svg></Slot>
            <Sep $before={2} $after={6.500} />
            <Slot $w={22}><Svg><path d="M3 3h3M4.500 3v12M3 15h3" /><path d="M8 3v11l2.500-2.500L12.500 16l2-1-2-4H16z" fill="#555" /></Svg></Slot>
            <Slot $w={22}><Pressed><Svg s={17}><path d={hand} fill="#f4f4f4" stroke="#777" transform="translate(1.500 0)" /></Svg></Pressed></Slot>
            <Sep $before={5.500} $after={4.500} />
            {zoomIcons.map((icon, i) => <Slot key={i} $w={23.300}>{icon}</Slot>)}
            <Field $w={34} $ml={3.500}>90,3%</Field>
            <DropButton><Caret /></DropButton>
            {fitIcons.map((icon, i) => <Slot key={i} $w={23.500}>{icon}</Slot>)}
            <Sep $before={4} $after={4} />
            {viewIcons.map((icon, i) => <Slot key={i} $w={23.300}>{icon}</Slot>)}
            <Grow />
            <PanelLink $w={46}>Tools</PanelLink>
            <Sep $dotted />
            <PanelLink $w={69}>Fill &amp; Sign</PanelLink>
            <Sep $dotted />
            <PanelLink $w={68}>Comment</PanelLink>
          </Toolbar>
          <Body>
            <SidePanel>
              <SideSlot><svg width="16" height="17" viewBox="0 0 16 17"><path d="M2 4h7v11H2zM5 2h6l3 3v9H5z" fill="#adadad" stroke="#888" /></svg></SideSlot>
              <SideSlot><svg width="12" height="16" viewBox="0 0 12 16"><path d="M1 1h4v13l-2-2-2 2z" fill="#a3b2b2" /><path d="M6 1h5v10H6z" fill="#999" /><path d="M7 4h3M7 6h3M7 8h3" stroke="#666" /></svg></SideSlot>
              <SideSlot><svg width="14" height="14" viewBox="0 0 14 14" fill="none" stroke="#999"><path d="M1 12l3-4 2 2 7-8M3 12l3-2" /></svg></SideSlot>
              <SideSlot><svg width="16" height="14" viewBox="0 0 16 14" fill="none" stroke="#aaa"><path d="M1 2h13v7H1z" fill="#888" /><path d="M3 8l9-6M9 7l5 3M7 9v4" /></svg></SideSlot>
            </SidePanel>
            <Page>
              <Column $w={423} $pl={21} $body={387.500} $top={-2.300} $border>
                <Text rows={col1a} lh={13.860} />
                <Heading $h={23.500} $drop={4}>Reguły walki</Heading>
                <Text rows={col1b} lh={13.950} />
              </Column>
              <Column $w={402} $pl={20} $body={367.500} $top={-5.400} $border>
                <Text rows={col2a} lh={14.100} />
                <Heading $h={15.900}>Klasy walczących</Heading>
                <Text rows={col2b} lh={13.820} />
              </Column>
              <Column $w={438} $pl={20} $body={403.500} $top={-5.500}>
                <Text rows={col3a} lh={13.810} />
                <Heading $h={16.200}>Dodatkowe wymagania</Heading>
                <Text rows={col3b} lh={14.080} />
              </Column>
              <HandPointer><svg width="14" height="18" viewBox="0 0 16 18"><path d={hand} fill="#fff" stroke="#777" strokeWidth=".8" /></svg></HandPointer>
            </Page>
            <Scroll>
              <ScrollCap $h={24}><svg width="6" height="4" viewBox="0 0 6 4"><path d="M.5 3.500L3 1l2.500 2.500" fill="none" stroke="#555" /></svg></ScrollCap>
              <ScrollCap $h={162} />
              <Thumb />
              <ScrollEnd $h={31}><svg width="6" height="4" viewBox="0 0 6 4"><path d="M.5.5L3 3 5.500.5" fill="none" stroke="#555" /></svg></ScrollEnd>
            </Scroll>
          </Body>
        </Win>
      </Desktop>
    </>
  );
}
